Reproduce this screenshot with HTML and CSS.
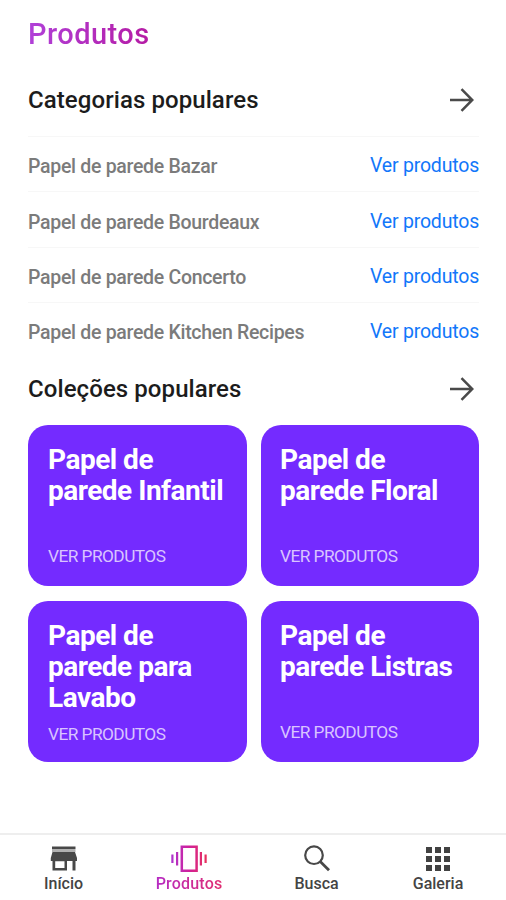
FILE: index.html
```html
<!DOCTYPE html>
<html lang="pt-BR">
<head>
<meta charset="utf-8">
<title>Produtos</title>
<link rel="stylesheet" href="styles.css">
</head>
<body>
<main>
  <h1>Produtos</h1>
  <section>
    <header class="section-head categories-head">
      <h2>Categorias populares</h2>
      <svg class="arrow" viewBox="0 0 24 24"><path d="M0 12H22.500M11.500 1.200L22.300 12L11.500 22.800"/></svg>
    </header>
    <ul class="categories">
      <li><span>Papel de parede Bazar</span><a>Ver produtos</a></li>
      <li><span>Papel de parede Bourdeaux</span><a>Ver produtos</a></li>
      <li><span>Papel de parede Concerto</span><a>Ver produtos</a></li>
      <li><span>Papel de parede Kitchen Recipes</span><a>Ver produtos</a></li>
    </ul>
  </section>
  <section>
    <header class="section-head collections-head">
      <h2>Coleções populares</h2>
      <svg class="arrow" viewBox="0 0 24 24"><path d="M0 12H22.500M11.500 1.200L22.300 12L11.500 22.800"/></svg>
    </header>
    <div class="cards">
      <article class="card"><h3>Papel de<br>parede Infantil</h3><p>VER PRODUTOS</p></article>
      <article class="card"><h3>Papel de<br>parede Floral</h3><p>VER PRODUTOS</p></article>
      <article class="card tall"><h3>Papel de<br>parede para<br>Lavabo</h3><p>VER PRODUTOS</p></article>
      <article class="card"><h3>Papel de<br>parede Listras</h3><p>VER PRODUTOS</p></article>
    </div>
  </section>
</main>
<nav>
  <a class="tab">
    <svg viewBox="0 0 28 28" fill="#484848"><path d="M2 1.500h23.500v2.500H2z"/><path fill="#b0b0b0" d="M2 4h23.500v3H2z"/><path d="M2.500 7h22.500l2 6v3h-1.500v9.500h-3V16H17v9.500H2.500V16H.8v-3zM5.200 16.200v6.800h9.300v-6.800z"/></svg>
    <span>Início</span>
  </a>
  <a class="tab active">
    <svg class="carousel" viewBox="0 0 36 28" fill="none"><defs><linearGradient id="pink" gradientUnits="userSpaceOnUse" x1="0" y1="0" x2="36" y2="0"><stop stop-color="#ad36cf"/><stop offset=".5" stop-color="#d0209a"/><stop offset="1" stop-color="#e8325c"/></linearGradient></defs><path stroke="url(#pink)" stroke-width="2.500" d="M10.800 1.800h14.800v24h-14.800z"/><path fill="url(#pink)" d="M.3 9.500h2.200v8.500H.3zM5 7h2.200v13.500H5zM28.800 7H31v13.500h-2.200zM33.500 9.500h2.200V18h-2.200z"/></svg>
    <span>Produtos</span>
  </a>
  <a class="tab">
    <svg viewBox="0 0 28 28" fill="none" stroke="#484848"><circle cx="11" cy="10.200" r="8.800" stroke-width="2.200"/><path d="M17.200 16.500l8.800 8.700" stroke-width="2.800"/></svg>
    <span>Busca</span>
  </a>
  <a class="tab">
    <svg viewBox="0 0 28 28" fill="#424242"><path d="M2 2h6v6H2zM11 2h6v6h-6zM20 2h6v6h-6zM2 11h6v6H2zM11 11h6v6h-6zM20 11h6v6h-6zM2 20h6v6H2zM11 20h6v6h-6zM20 20h6v6h-6z"/></svg>
    <span>Galeria</span>
  </a>
</nav>
</body>
</html>
```
FILE: styles.css
```css
* { box-sizing: border-box; margin: 0; padding: 0; }
body {
  display: flex;
  flex-direction: column;
  height: 900px;
  background: #fff;
  font-family: Roboto, sans-serif;
  color: #1c1c1c;
  overflow: hidden;
}
main { flex: 1; padding: 16px 27px 0 28px; }
h1 {
  width: max-content;
  height: 36px;
  font-size: 29px;
  line-height: 36px;
  font-weight: 500;
  letter-spacing: 0.45px;
  background: linear-gradient(90deg, #b040d8, #b51ba4);
  -webkit-background-clip: text;
  background-clip: text;
  color: transparent;
}
.section-head {
  display: flex;
  justify-content: space-between;
  align-items: center;
  padding-right: 5px;
}
.categories-head { height: 84px; padding-top: 12px; }
.collections-head { height: 68px; padding-bottom: 4px; }
h2 { font-size: 24px; font-weight: 500; line-height: 32px; letter-spacing: 0.08px; }
.arrow { width: 24px; height: 24px; fill: none; stroke: #4a4a4a; stroke-width: 2.5; }
.categories { list-style: none; }
.categories li {
  display: flex;
  justify-content: space-between;
  height: 55.3px;
  padding-top: 17.3px;
  border-top: 1px solid #f7f7f7;
  font-size: 19.5px;
  line-height: 24px;
}
.categories span { color: #7b7b7b; font-weight: 500; padding-top: 1px; letter-spacing: -0.3px; }
.categories a { color: #1277fa; letter-spacing: -0.2px; }
.cards { display: grid; grid-template-columns: 219px 218px; gap: 15px 14px; }
.card {
  display: flex;
  flex-direction: column;
  justify-content: space-between;
  height: 161px;
  padding: 19px 19px 20px 20px;
  border-radius: 20px;
  background: #742bff;
  color: #fff;
}
.card:nth-child(even) { padding-left: 19px; }
.card h3 { font-size: 28px; line-height: 31px; font-weight: 700; white-space: nowrap; letter-spacing: -0.5px; }
.card p { font-size: 17.3px; line-height: 20px; color: #d9c4ff; letter-spacing: -0.55px; }
.card.tall { padding-bottom: 18px; }
nav {
  display: grid;
  grid-template-columns: 127px 124px 131px 112px;
  height: 67px;
  padding-top: 10px;
  border-top: 2px solid #eee;
}
.tab { display: flex; flex-direction: column; align-items: center; color: #444; }
.tab svg { width: 28px; height: 28px; }
.tab .carousel { width: 36px; }
.tab span { font-size: 16px; line-height: 21px; font-weight: 500; }
.active span {
  letter-spacing: 0.2px;
  background: linear-gradient(90deg, #b62bc4, #e02c70);
  -webkit-background-clip: text;
  background-clip: text;
  color: transparent;
}
```
